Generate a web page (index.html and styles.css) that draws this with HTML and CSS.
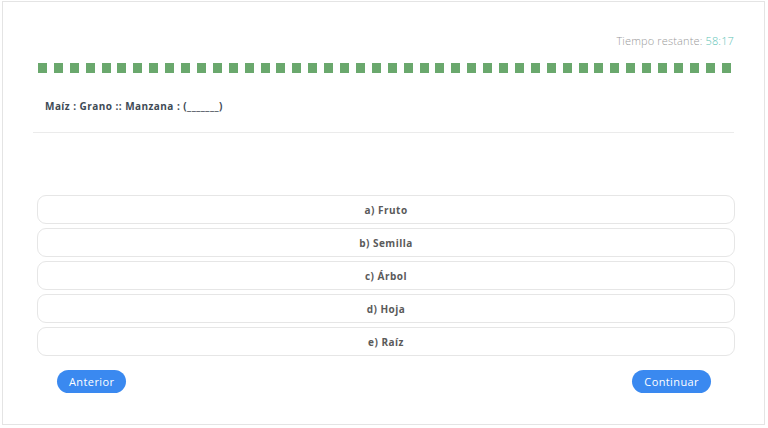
FILE: index.html
```html
<!DOCTYPE html>
<html lang="es">
<head>
    <meta charset="UTF-8">
    <meta name="viewport" content="width=device-width, initial-scale=1.0">
    <title>Evaluación</title>
    <link rel="stylesheet" href="styles.css">
</head>
<body>
    <div class="card">
        <div class="timer">Tiempo restante: <span class="time">58:17</span></div>

        <div class="progress"></div>

        <p class="question">Maíz : Grano :: Manzana : (_______)</p>

        <hr class="divider">

        <div class="options">
            <button class="option">a) Fruto</button>
            <button class="option">b) Semilla</button>
            <button class="option">c) Árbol</button>
            <button class="option">d) Hoja</button>
            <button class="option">e) Raíz</button>
        </div>

        <div class="nav">
            <button class="nav-btn">Anterior</button>
            <button class="nav-btn">Continuar</button>
        </div>
    </div>
</body>
</html>
```

FILE: styles.css
```css
* {
    box-sizing: border-box;
    margin: 0;
    padding: 0;
}

body {
    font-family: "Open Sans", "Liberation Sans", sans-serif;
    background: #fff;
    color: #444;
}

.card {
    margin: 1px 3px 2px 2px;
    height: 424px;
    border: 1px solid #e4e4e4;
    padding: 32px 30px 0 30px;
}

.timer {
    text-align: right;
    font-size: 11px;
    line-height: 14px;
    font-weight: 300;
    color: #9a9a9a;
    letter-spacing: 0.15px;
}

.time {
    color: #5cc3b5;
}

.progress {
    margin: 15px 3px 0 5px;
    height: 10px;
    background: repeating-linear-gradient(90deg, #6aa86d 0, #6aa86d 9px, transparent 9px, transparent 15.9px);
}

.question {
    margin-top: 26px;
    padding-left: 12px;
    font-size: 10px;
    line-height: 14px;
    font-weight: 700;
    letter-spacing: 0.45px;
    color: #3e4a55;
}

.divider {
    margin-top: 19px;
    border: 0;
    border-top: 1px solid #ebebeb;
}

.options {
    display: flex;
    flex-direction: column;
    gap: 4px;
    margin: 62px -1px 0 4px;
}

.option {
    height: 29px;
    background: #fff;
    border: 1px solid #e6e6e6;
    border-radius: 9px;
    font-family: inherit;
    font-size: 10px;
    font-weight: 700;
    letter-spacing: 0.5px;
    color: #5a5a5a;
    cursor: pointer;
}

.nav {
    display: flex;
    justify-content: space-between;
    margin: 14px 23px 0 24px;
}

.nav-btn {
    height: 23px;
    padding: 0 12px;
    border: 0;
    border-radius: 12px;
    background: #3a89f0;
    color: #fff;
    font-family: inherit;
    font-size: 11px;
    letter-spacing: 0.4px;
    cursor: pointer;
}
```
